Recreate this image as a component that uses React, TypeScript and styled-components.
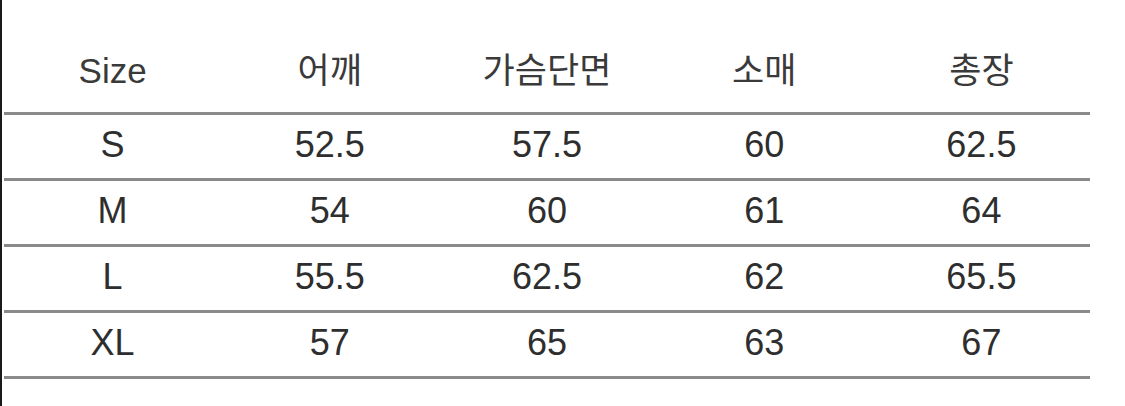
import * as React from 'react';
import styled, {createGlobalStyle} from 'styled-components';

const GlobalStyle = createGlobalStyle`
  html, body {
    margin: 0;
    padding: 0;
    background: #ffffff;
  }
  body {
    font-family: "Liberation Sans", Arial, "Noto Sans CJK KR", sans-serif;
  }
`

const columns = ['Size', '어깨', '가슴단면', '소매', '총장'];

const rows: string[][] = [
    ['S', '52.5', '57.5', '60', '62.5'],
    ['M', '54', '60', '61', '64'],
    ['L', '55.5', '62.5', '62', '65.5'],
    ['XL', '57', '65', '63', '67'],
];

const App: React.FC = () => {
    return (
        <Page>
            <GlobalStyle/>
            <Table>
                <HeadRow>
                    {columns.map(c => <Cell key={c} head>{c}</Cell>)}
                </HeadRow>
                {rows.map(r => (
                    <Row key={r[0]}>
                        {r.map((v, i) => <Cell key={i}>{v}</Cell>)}
                    </Row>
                ))}
            </Table>
        </Page>
    )
}

const Page = styled.div`
  width: 1125px;
  height: 406px;
  box-sizing: border-box;
  border-left: 2px solid #1a1a1a;
  padding-left: 2px;
  background: #ffffff;
  overflow: hidden;
`

const Table = styled.div`
  width: 1086px;
  display: flex;
  flex-direction: column;
`

const Row = styled.div`
  display: grid;
  grid-template-columns: repeat(5, 1fr);
  align-items: center;
  height: 60px;
  padding-bottom: 3px;
  border-bottom: 3px solid #8a8a8a;
`

const HeadRow = styled(Row)`
  height: 80px;
  padding-top: 30px;
  padding-bottom: 2px;
`

const Cell = styled.div<{ head?: boolean }>`
  text-align: center;
  font-size: ${p => p.head ? '35px' : '36px'};
  line-height: 1;
  color: ${p => p.head ? '#3a3a3a' : '#2e2e2e'};
  font-family: "Liberation Sans", Arial, "Noto Sans CJK KR", sans-serif;
`

export default App;
